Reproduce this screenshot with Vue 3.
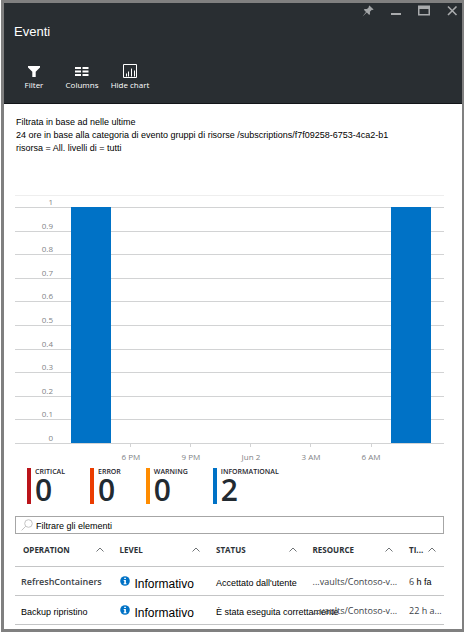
<script setup>
import { ref, computed } from 'vue'

const query = ref('')

const description = [
  'Filtrata in base ad nelle ultime',
  '24 ore in base alla categoria di evento gruppi di risorse /subscriptions/f7f09258-6753-4ca2-b1',
  'risorsa = All. livelli di = tutti',
]

const yLabels = ['0.9', '0.8', '0.7', '0.6', '0.5', '0.4', '0.3', '0.2', '0.1', '0']
const xLabels = ['6 PM', '9 PM', 'Jun 2', '3 AM', '6 AM']
const bars = [
  { start: 13.1, value: 1 },
  { start: 87.7, value: 1 },
]

const stats = [
  { label: 'CRITICAL', count: 0, tone: 'critical' },
  { label: 'ERROR', count: 0, tone: 'error' },
  { label: 'WARNING', count: 0, tone: 'warning' },
  { label: 'INFORMATIONAL', count: 2, tone: 'informational' },
]

const columns = ['OPERATION', 'LEVEL', 'STATUS', 'RESOURCE', 'TI...']
const events = [
  {
    operation: 'RefreshContainers',
    native: true,
    level: 'Informativo',
    status: "Accettato dall'utente",
    resource: '...vaults/Contoso-v...',
    time: '6',
    unit: 'h fa',
  },
  {
    operation: 'Backup ripristino',
    native: false,
    level: 'Informativo',
    status: 'È stata eseguita correttamente',
    resource: '...vaults/Contoso-v...',
    time: '22 h a...',
    unit: '',
  },
]
const shown = computed(() =>
  events.filter((e) =>
    (e.operation + e.level + e.status).toLowerCase().includes(query.value.toLowerCase()),
  ),
)
</script>

<template>
  <main class="blade">
    <header class="head">
      <div class="window-controls">
        <button type="button" aria-label="Pin">
          <svg width="12" height="12" viewBox="0 0 12 12">
            <path d="M7.4 0.4 11.6 4.4 10.7 5.1 9.9 4.8 7.9 6.8 8 9.1 7.2 9.9 4.8 7.6 0.5 11.5 4 6.9 1.8 4.7 2.7 3.9 5 4.1 7 2.1 6.7 1.2Z" fill="#a3a6a8" />
          </svg>
        </button>
        <button type="button" aria-label="Minimize">
          <svg width="12" height="12" viewBox="0 0 12 12">
            <path d="M1 8h10v2H1z" fill="#a9abad" />
          </svg>
        </button>
        <button type="button" aria-label="Maximize">
          <svg width="12" height="12" viewBox="0 0 12 12">
            <path fill-rule="evenodd" d="M0 0.5h12v10H0zM1.5 4v5h9V4z" fill="#a9abad" />
          </svg>
        </button>
        <button type="button" aria-label="Close">
          <svg width="12" height="12" viewBox="0 0 12 12">
            <path d="M2 1.5 10.5 10M10.5 1.5 2 10" fill="none" stroke="#a9abad" stroke-width="1.6" />
          </svg>
        </button>
      </div>
      <h1>Eventi</h1>
      <nav class="toolbar">
        <button type="button">
          <svg width="14" height="14" viewBox="0 0 14 14">
            <path d="M1 2h12v1.500L8.700 7.800V13H5.300V7.800L1 3.500z" fill="#fff" />
          </svg>
          <span>Filter</span>
        </button>
        <button type="button">
          <svg width="14" height="14" viewBox="0 0 14 14">
            <path d="M0 3h6v2H0zM7.500 3h6v2h-6zM0 6.500h6v2H0zM7.500 6.500h6v2h-6zM0 10h6v2H0zM7.500 10h6v2h-6z" fill="#fff" />
          </svg>
          <span>Columns</span>
        </button>
        <button type="button">
          <svg width="14" height="14" viewBox="0 0 14 14">
            <path d="M.5.5h13v13H.5z" fill="none" stroke="#fff" />
            <path d="M3.500 12.500V9.500M5.500 12.500V7.500M8.500 12.500V4.500M11.500 12.500V6.500" stroke="#fff" />
          </svg>
          <span>Hide chart</span>
        </button>
      </nav>
    </header>

    <section class="body">
      <p class="description">
        <span v-for="line in description" :key="line">{{ line }}</span>
      </p>

      <figure class="chart">
        <div class="plot">
          <div class="grid-lines">
            <div class="line first"><span>1</span></div>
            <div v-for="y in yLabels" :key="y" class="line"><span>{{ y }}</span></div>
          </div>
          <div class="bars">
            <div
              v-for="bar in bars"
              :key="bar.start"
              class="bar"
              :style="{ marginLeft: bar.start + '%', height: bar.value * 100 + '%' }"
            ></div>
          </div>
        </div>
        <div class="x-axis">
          <span v-for="x in xLabels" :key="x">{{ x }}</span>
        </div>
      </figure>

      <ul class="stats">
        <li v-for="s in stats" :key="s.label" :class="s.tone">
          <span class="stat-label">{{ s.label }}</span>
          <strong>{{ s.count }}</strong>
        </li>
      </ul>

      <label class="search">
        <svg width="12" height="12" viewBox="0 0 12 12">
          <circle cx="7.500" cy="4.500" r="3.800" fill="none" stroke="#c4c4c4" />
          <path d="M4.800 7.200.6 11.400" stroke="#c4c4c4" />
        </svg>
        <input v-model="query" type="text" placeholder="Filtrare gli elementi" aria-label="Filtrare gli elementi" />
      </label>

      <table class="events">
        <thead>
          <tr>
            <th v-for="c in columns" :key="c" scope="col">
              <div class="th">
                <span>{{ c }}</span>
                <svg width="8" height="5" viewBox="0 0 8 5">
                  <path d="M.5 4.500 4 1 7.500 4.500" fill="none" stroke="#6f7376" />
                </svg>
              </div>
            </th>
          </tr>
        </thead>
        <tbody>
          <tr v-for="e in shown" :key="e.operation">
            <td :class="['operation', { native: e.native }]">{{ e.operation }}</td>
            <td>
              <div class="level">
                <svg width="10" height="10" viewBox="0 0 10 10">
                  <circle cx="5" cy="5" r="4.800" fill="#0072c6" />
                  <path d="M4.200 1.700h1.700v1.400H4.200zM3.700 4h2.200v3.300h.6v.9H3.600v-.9h.7V4.900h-.6z" fill="#fff" />
                </svg>
                <span>{{ e.level }}</span>
              </div>
            </td>
            <td class="status">{{ e.status }}</td>
            <td class="resource">{{ e.resource }}</td>
            <td class="time">{{ e.time }} <span v-if="e.unit">{{ e.unit }}</span></td>
          </tr>
        </tbody>
      </table>
    </section>
  </main>
</template>

<style>
body {
  margin: 0;
  background: #fff;
}
</style>

<style scoped>
.blade {
  box-sizing: border-box;
  min-height: 100vh;
  margin-left: 1px;
  border: 3px solid #808080;
  border-right-width: 2px;
  background: #fff;
  color: #000;
  font: 9px/13px "Liberation Sans", Arial, sans-serif;
}
button {
  border: 0;
  padding: 0;
  background: none;
  color: inherit;
  font: inherit;
}
svg {
  display: block;
  flex: none;
}
.head {
  background: #292e32;
  border-bottom: 1px solid #121518;
  color: #fff;
}
.window-controls {
  display: flex;
  justify-content: flex-end;
  gap: 16px;
  padding: 2px 4px 0 0;
}
h1 {
  margin: 0;
  padding: 7px 10px 0;
  font-size: 13px;
  font-weight: 400;
  line-height: 16px;
}
.toolbar {
  display: flex;
  padding: 24px 6px 13px;
}
.toolbar button {
  display: flex;
  flex-direction: column;
  align-items: center;
  gap: 1px;
  width: 48px;
  font: 8px/11px "Open Sans", "Noto Sans", sans-serif;
  white-space: nowrap;
}
.body {
  padding: 12px 18px 4px 11px;
}
.description {
  display: flex;
  flex-direction: column;
  margin: 0 0 40px;
  padding-left: 1px;
}
.chart {
  margin: 0;
  color: #7f8386;
  font: 8px/10px "Open Sans", "Noto Sans", sans-serif;
}
.plot {
  display: grid;
  height: 249px;
  border-top: 1px solid #eee;
  box-sizing: border-box;
}
.grid-lines,
.bars {
  grid-area: 1 / 1;
}
.grid-lines {
  display: flex;
  flex-direction: column;
}
.line {
  display: flex;
  flex: 1;
  align-items: flex-end;
  box-sizing: border-box;
  border-bottom: 1px solid #d2d3d4;
}
.line.first {
  flex: 0 0 12px;
}
.line span {
  width: 38px;
  text-align: right;
}
.bars {
  display: grid;
  align-items: end;
  padding: 11px 0 1px;
}
.bar {
  grid-area: 1 / 1;
  width: 9.2%;
  background: #0072c6;
}
.x-axis {
  display: grid;
  grid-template-columns: 20% repeat(5, 14%);
  text-align: center;
}
.x-axis span:first-child {
  grid-column: 2;
}
.x-axis span::before {
  content: "";
  display: block;
  width: 1px;
  height: 3px;
  margin: 0 auto 5px;
  background: #d2d3d4;
}
.stats {
  display: flex;
  gap: 25px;
  margin: 6px 0 12px;
  padding: 0 0 0 12px;
  list-style: none;
}
.stats li {
  display: flex;
  flex-direction: column;
  border-left: 4px solid var(--tone);
  padding-left: 4px;
  font-family: "Open Sans", "Noto Sans", sans-serif;
}
.stat-label {
  color: #1f262d;
  font-size: 7px;
  font-weight: 600;
  line-height: 8px;
}
.stats strong {
  color: #222a31;
  font-size: 30px;
  font-weight: 600;
  line-height: 28px;
}
.critical { --tone: #ba141a; }
.error { --tone: #eb3c00; }
.warning { --tone: #ff8c00; }
.informational { --tone: #0072c6; }
.search {
  display: flex;
  align-items: center;
  gap: 3px;
  height: 16px;
  padding-left: 5px;
  border: 1px solid #a6a6a6;
}
.search input {
  flex: 1;
  min-width: 0;
  padding: 3px 0 0;
  border: 0;
  outline: 0;
  background: none;
  color: #000;
  font: inherit;
}
.search input::placeholder {
  color: #000;
  opacity: 1;
}
.events {
  width: 100%;
  border-collapse: collapse;
  table-layout: fixed;
}
th,
td {
  box-sizing: border-box;
  width: 22.5%;
  padding: 0 0 0 8px;
  border-bottom: 1px solid #c4c5c6;
  text-align: left;
  white-space: nowrap;
}
th:last-child,
td:last-child {
  width: auto;
}
th {
  height: 32px;
  color: #2b3136;
  font: 700 8px/12px "Open Sans", "Noto Sans", sans-serif;
}
.th {
  display: flex;
  align-items: center;
  justify-content: space-between;
  padding-right: 8px;
}
td {
  height: 29px;
  padding-top: 2px;
}
.operation {
  padding-left: 6px;
}
.status,
.operation:not(.native) {
  padding-top: 5px;
}
.operation.native,
.resource,
.time {
  color: #3c4247;
  font-family: "Open Sans", "Noto Sans", sans-serif;
}
.operation.native {
  font-weight: 600;
}
.time span {
  color: #000;
  font-family: "Liberation Sans", Arial, sans-serif;
}
.level {
  display: flex;
  gap: 5px;
  font-size: 12px;
  line-height: 14px;
}
.level svg {
  margin-top: 3px;
}
.level span {
  padding-top: 4px;
}
</style>
